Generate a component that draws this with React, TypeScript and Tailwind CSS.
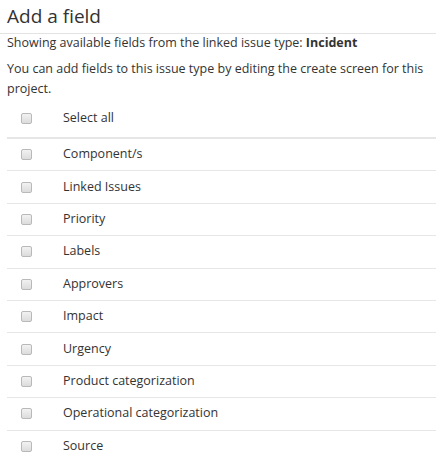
const fields = [
  "Component/s",
  "Linked Issues",
  "Priority",
  "Labels",
  "Approvers",
  "Impact",
  "Urgency",
  "Product categorization",
  "Operational categorization",
  "Source",
];

function Box() {
  return (
    <span className="block h-[11px] w-[11px] rounded-[2px] border border-[#b9b9b9] bg-gradient-to-b from-[#f2f2f2] to-[#dcdcdc]" />
  );
}

export default function App() {
  return (
    <div
      className="min-h-screen w-[436px] bg-white text-[#333]"
      style={{ fontFamily: '"Open Sans", "Noto Sans", Arial, sans-serif' }}
    >
      <div className="flex h-[34px] items-center border-b border-[#e3e3e3] pl-[7px]">
        <h1 className="text-[19px] leading-none text-[#333]">Add a field</h1>
      </div>
      <p className="pl-[7px] text-[12.5px] leading-[18px]">
        Showing available fields from the linked issue type: <span className="font-bold">Incident</span>
      </p>
      <p className="mt-[7px] pl-[7px] pr-1 text-[12.5px] leading-[20px]">
        You can add fields to this issue type by editing the create screen for this project.
      </p>
      <div className="ml-[7px] flex h-[40px] items-center border-b-2 border-[#e6e6e6] text-[12.5px]">
        <div className="w-[56px] pl-[14px]">
          <Box />
        </div>
        <span>Select all</span>
      </div>
      {fields.map((f, i) => (
        <div
          key={f}
          className={`ml-[7px] flex h-[32.4px] items-center text-[12.5px] ${
            i < fields.length - 1 ? "border-b border-[#e6e6e6]" : ""
          }`}
        >
          <div className="w-[56px] pl-[14px]">
            <Box />
          </div>
          <span>{f}</span>
        </div>
      ))}
    </div>
  );
}
